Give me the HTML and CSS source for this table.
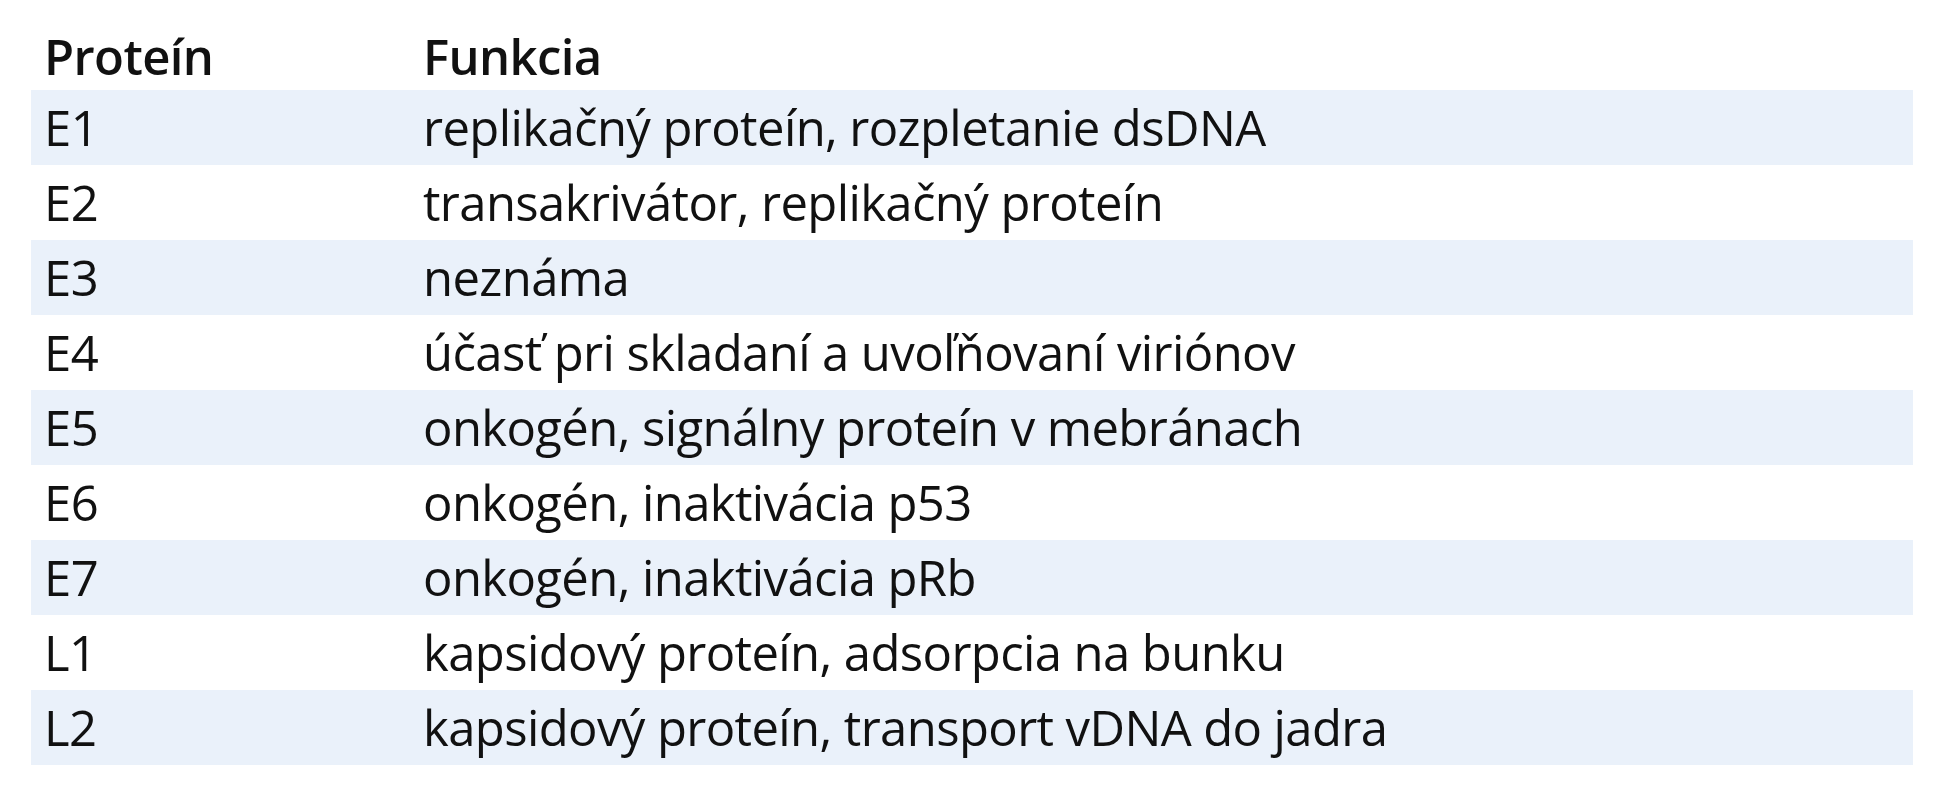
FILE: index.html
```html
<!DOCTYPE html>
<html lang="sk">
<head>
<meta charset="utf-8">
<title>Proteíny</title>
<link rel="stylesheet" href="styles.css">
</head>
<body>
<main class="page">
  <table class="ptable">
    <thead>
      <tr class="head-row">
        <th class="col-name">Proteín</th>
        <th class="col-func">Funkcia</th>
      </tr>
    </thead>
    <tbody>
      <tr class="row shaded"><td>E1</td><td>replikačný proteín, rozpletanie dsDNA</td></tr>
      <tr class="row"><td>E2</td><td>transakrivátor, replikačný proteín</td></tr>
      <tr class="row shaded"><td>E3</td><td>neznáma</td></tr>
      <tr class="row"><td>E4</td><td>účasť pri skladaní a uvoľňovaní viriónov</td></tr>
      <tr class="row shaded"><td>E5</td><td>onkogén, signálny proteín v mebránach</td></tr>
      <tr class="row"><td>E6</td><td>onkogén, inaktivácia p53</td></tr>
      <tr class="row shaded"><td>E7</td><td>onkogén, inaktivácia pRb</td></tr>
      <tr class="row"><td>L1</td><td>kapsidový proteín, adsorpcia na bunku</td></tr>
      <tr class="row shaded"><td>L2</td><td>kapsidový proteín, transport vDNA do jadra</td></tr>
    </tbody>
  </table>
</main>
</body>
</html>
```
FILE: styles.css
```css
html, body {
  margin: 0;
  padding: 0;
  background: #ffffff;
}

.page {
  padding: 16px 28px 0 31px;
}

.ptable {
  width: 1882px;
  border-collapse: collapse;
  border-spacing: 0;
  font-family: "Open Sans", "Noto Sans", sans-serif;
  font-size: 49px;
  letter-spacing: -0.6px;
  color: #111111;
}

.ptable th,
.ptable td {
  padding: 0 0 0 13px;
  text-align: left;
  vertical-align: top;
  white-space: nowrap;
}

.ptable th {
  font-weight: 600;
  padding-top: 6px;
  height: 68px;
  line-height: 68px;
}

.col-name {
  width: 366px;
}

.row td {
  height: 75px;
  line-height: 75px;
}

.shaded td {
  background: #eaf1fa;
}
```
